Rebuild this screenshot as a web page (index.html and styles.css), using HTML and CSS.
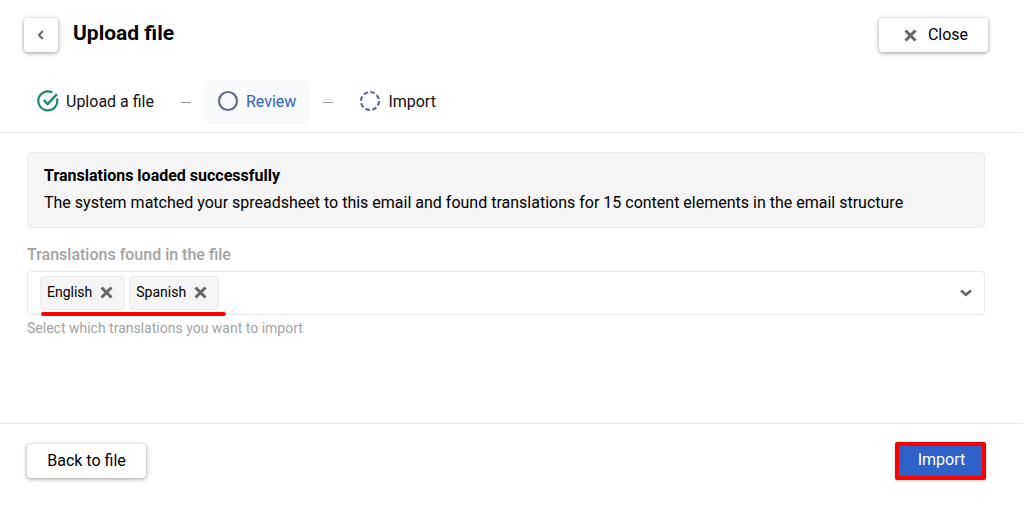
FILE: index.html
```html
<!DOCTYPE html>
<html lang="en">
<head>
<meta charset="utf-8">
<title>Upload file</title>
<link rel="stylesheet" href="styles.css">
</head>
<body>
<div class="page">
  <header class="top">
    <div class="top-left">
      <button class="btn btn-icon" aria-label="Back">
        <svg width="12" height="12" viewBox="0 0 12 12"><path d="M7.8 2 4 6l3.8 4" fill="none" stroke="#666" stroke-width="2"/></svg>
      </button>
      <h1 class="title">Upload file</h1>
    </div>
    <button class="btn btn-close">
      <svg class="x" width="13" height="13" viewBox="0 0 13 13"><path d="M1.5 1.5l10 10M11.5 1.5l-10 10" stroke="#666" stroke-width="3" fill="none"/></svg>
      Close
    </button>
  </header>
  <nav class="steps">
    <div class="step">
      <svg width="22" height="22" viewBox="0 0 22 22"><path d="M20 8.6A9.5 9.5 0 1 1 15.4 2.6" fill="none" stroke="#1e8a62" stroke-width="2.2"/><path d="M6.8 10.2l3.8 3.8L20 4.2" fill="none" stroke="#1e8a62" stroke-width="2.4"/></svg>
      <span>Upload a file</span>
    </div>
    <span class="dash"></span>
    <div class="step step-active">
      <svg width="22" height="22" viewBox="0 0 22 22"><circle cx="11" cy="11" r="9" fill="none" stroke="#5e6b92" stroke-width="2.2"/></svg>
      <span>Review</span>
    </div>
    <span class="dash dash-last"></span>
    <div class="step">
      <svg width="22" height="22" viewBox="0 0 22 22"><circle cx="11" cy="11" r="9" fill="none" stroke="#5e6b92" stroke-width="2.2" stroke-dasharray="4.6 2.47"/></svg>
      <span>Import</span>
    </div>
  </nav>
  <main class="content">
    <section class="alert">
      <strong class="alert-title">Translations loaded successfully</strong>
      <p class="alert-text">The system matched your spreadsheet to this email and found translations for 15 content elements in the email structure</p>
    </section>
    <label class="label">Translations found in the file</label>
    <div class="select">
      <div class="chip">English
        <svg width="13" height="13" viewBox="0 0 13 13"><path d="M1.5 1.5l10 10M11.5 1.5l-10 10" stroke="#666" stroke-width="3" fill="none"/></svg>
      </div>
      <div class="chip">Spanish
        <svg width="13" height="13" viewBox="0 0 13 13"><path d="M1.5 1.5l10 10M11.5 1.5l-10 10" stroke="#666" stroke-width="3" fill="none"/></svg>
      </div>
      <svg class="chev" width="12" height="8" viewBox="0 0 12 8"><path d="M1 1.4 6 5.8l5-4.4" fill="none" stroke="#666" stroke-width="2.6"/></svg>
      <span class="underline"></span>
    </div>
    <p class="hint">Select which translations you want to import</p>
  </main>
  <footer class="bottom">
    <button class="btn btn-back">Back to file</button>
    <button class="btn btn-primary">Import</button>
  </footer>
</div>
</body>
</html>
```
FILE: styles.css
```css
* { box-sizing: border-box; }
html, body { margin: 0; height: 100%; background: #fff; }
body { font-family: Roboto, "Liberation Sans", sans-serif; color: #000; font-size: 16px; }
.page { width: 1023px; height: 506px; display: flex; flex-direction: column; overflow: hidden; }
.top { display: flex; justify-content: space-between; align-items: flex-start; padding: 18px 35px 0 24px; height: 80px; }
.top-left { display: flex; align-items: flex-start; gap: 15px; }
.title { margin: 0; font-size: 21px; line-height: 30px; font-weight: 700; }
.btn { border: 0; background: #fff; border-radius: 4px; box-shadow: 0 1px 4px rgba(0,0,0,.42); font: 400 16px/20px Roboto, "Liberation Sans", sans-serif; color: #000; display: inline-flex; align-items: center; justify-content: center; height: 34px; padding: 0; }
.btn-icon { width: 34px; }
.btn-close { width: 109px; gap: 11px; padding-left: 5px; }
.steps { display: flex; align-items: center; height: 44px; padding-left: 28px; }
.step { display: flex; align-items: center; gap: 7px; height: 44px; padding: 0 8px 2px 9px; font-size: 16px; color: #111; }
.step-active { background: #f9fafb; border-radius: 8px; color: #2f62c9; padding: 0 14px 2px 13px; }
.dash { width: 10px; height: 1px; background: #999; margin: 0 13px 0 19px; }
.dash-last { margin: 0 17px 0 13px; }
.content { margin-top: 8px; border-top: 1px solid #e9e9e9; padding: 19px 38px 0 27px; flex: 1; }
.alert { background: #f5f5f5; border: 1px solid #ebebeb; border-radius: 4px; height: 76px; padding: 13px 16px 0; }
.alert-title { display: block; font-size: 16px; line-height: 20px; font-weight: 700; }
.alert-text { margin: 7px 0 0; font-size: 16px; line-height: 20px; }
.label { display: block; margin-top: 17px; font-size: 16px; line-height: 20px; font-weight: 500; color: #a3a3a3; }
.select { position: relative; margin-top: 6px; height: 44px; border: 1px solid #e9e9e9; border-radius: 4px; display: flex; align-items: center; gap: 4px; padding: 0 12px; }
.chip { height: 34px; border: 1px solid #ebebeb; background: #f5f5f5; border-radius: 4px; display: flex; align-items: center; gap: 8px; padding: 0 11px 2px 6px; font-size: 14px; }
.chev { margin-left: auto; }
.underline { position: absolute; left: 13px; top: 40px; width: 185px; height: 4px; background: #f00; border-radius: 2px; }
.hint { margin: 5px 0 0; font-size: 14px; line-height: 16px; color: #a3a3a3; }
.bottom { height: 83px; border-top: 1px solid #e9e9e9; display: flex; justify-content: space-between; align-items: flex-start; padding: 20px 37px 0 27px; }
.btn-back { width: 119px; }
.btn-primary { width: 91px; height: 38px; margin-top: -2px; background: #2f62c9; color: #fff; border: 4px solid #f00; border-radius: 2px; padding: 0 0 2px 2px; box-shadow: 0 1px 3px rgba(0,0,0,.2); }
```
